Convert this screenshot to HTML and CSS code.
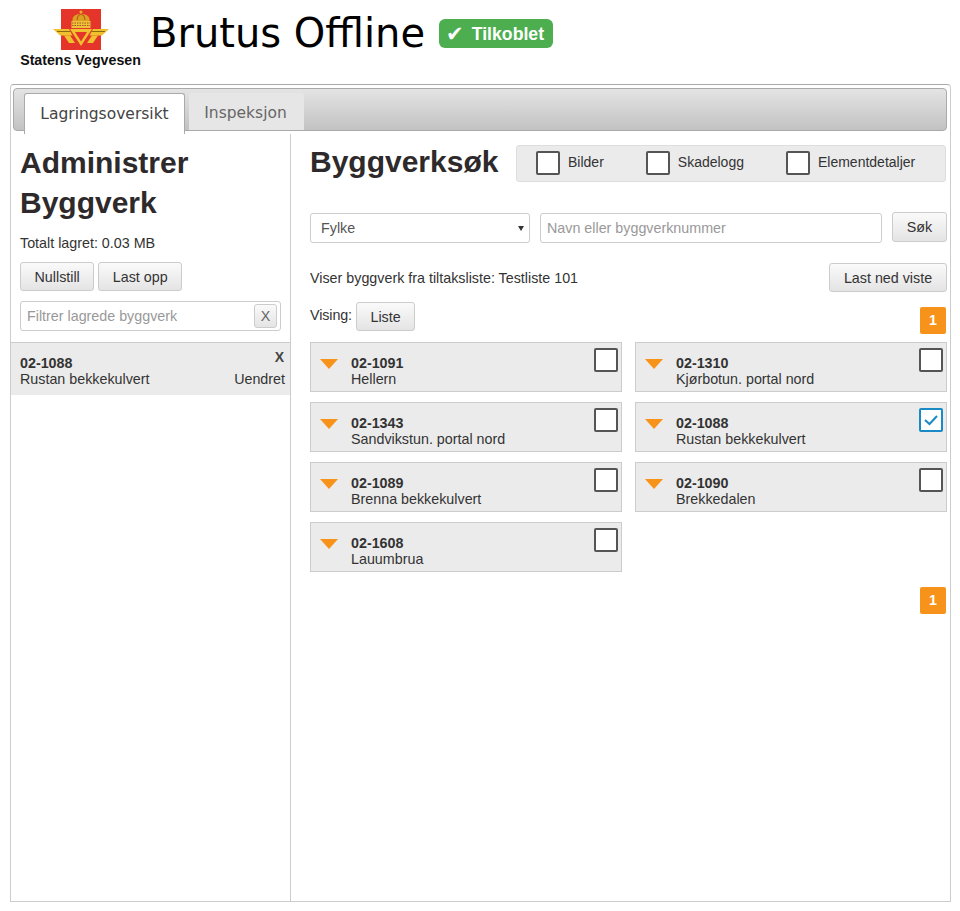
FILE: index.html
```html
<!DOCTYPE html>
<html lang="no">
<head>
<meta charset="utf-8">
<title>Brutus Offline</title>
<link rel="stylesheet" href="styles.css">
</head>
<body>
<header class="top">
  <div class="logo">
    <svg class="logo-mark" width="56" height="41" viewBox="0 0 56 41">
      <rect x="8" y="0" width="40" height="41" fill="#e5352b"/>
      <path d="M28 1.500v4M26.500 3h3" stroke="#e8b82a" stroke-width="1.300" fill="none"/>
      <path d="M19.500 10q1-5 8.500-5t8.500 5v3h-17z" fill="#d9a11f"/>
      <path d="M24 11q0-5 4-6q4 1 4 6" fill="none" stroke="#c9472a" stroke-width="1"/>
      <path d="M18.500 12h19v7h-19z" fill="#edc23a"/>
      <path d="M19 14h18M19 16.500h18" stroke="#a8501f" stroke-width="1" stroke-dasharray="1.500 1"/>
      <path d="M0 20h16l3.500 6.500H7z" fill="#efc12e"/>
      <path d="M56 20H40l-3.500 6.500H49z" fill="#efc12e"/>
      <path d="M4 22.500h13.500M52 22.500H38.500" stroke="#8a6a12" stroke-width="1"/>
      <path d="M17 20h22L28 37z" fill="#efc12e"/>
      <path d="M22 23h12l-6 9.500z" fill="#e5352b"/>
      <path d="M11 26.500h6l5 7.500h-6zM45 26.500h-6l-5 7.500h6z" fill="#efc12e"/>
    </svg>
    <span class="logo-text">Statens Vegvesen</span>
  </div>
  <h1 class="title">Brutus Offline</h1>
  <span class="badge"><span class="badge-check">✔</span> Tilkoblet</span>
</header>

<main class="panel">
  <nav class="tabbar">
    <span class="tab tab-active">Lagringsoversikt</span>
    <span class="tab">Inspeksjon</span>
  </nav>
  <div class="columns">
    <aside class="side">
      <div class="side-head">
        <h2 class="heading">Administrer Byggverk</h2>
        <p class="total">Totalt lagret: 0.03 MB</p>
        <div class="side-buttons">
          <button class="btn">Nullstill</button>
          <button class="btn">Last opp</button>
        </div>
        <div class="filter">
          <span class="placeholder">Filtrer lagrede byggverk</span>
          <button class="btn btn-x">X</button>
        </div>
      </div>
      <div class="saved">
        <div class="saved-text">
          <strong>02-1088</strong>
          <span>Rustan bekkekulvert</span>
        </div>
        <div class="saved-state">
          <b class="saved-x">X</b>
          <span>Uendret</span>
        </div>
      </div>
    </aside>
    <section class="content">
      <div class="content-head">
        <h2 class="heading">Byggverksøk</h2>
        <div class="options">
          <label class="option"><span class="box"></span>Bilder</label>
          <label class="option"><span class="box"></span>Skadelogg</label>
          <label class="option"><span class="box"></span>Elementdetaljer</label>
        </div>
      </div>
      <div class="search">
        <div class="field select">Fylke<span class="caret"></span></div>
        <div class="field name"><span class="placeholder">Navn eller byggverknummer</span></div>
        <button class="btn btn-search">Søk</button>
      </div>
      <div class="list-info">
        <span class="list-text">Viser byggverk fra tiltaksliste: Testliste 101</span>
        <button class="btn btn-down">Last ned viste</button>
      </div>
      <div class="view-row">
        <span class="view-label">Vising:</span>
        <button class="btn">Liste</button>
        <span class="page">1</span>
      </div>
      <div class="cards">
        <article class="card"><span class="tri"></span><div class="card-text"><strong>02-1091</strong><span>Hellern</span></div><span class="box"></span></article>
        <article class="card"><span class="tri"></span><div class="card-text"><strong>02-1310</strong><span>Kjørbotun. portal nord</span></div><span class="box"></span></article>
        <article class="card"><span class="tri"></span><div class="card-text"><strong>02-1343</strong><span>Sandvikstun. portal nord</span></div><span class="box"></span></article>
        <article class="card"><span class="tri"></span><div class="card-text"><strong>02-1088</strong><span>Rustan bekkekulvert</span></div><span class="box box-on"><svg width="20" height="20" viewBox="0 0 20 20"><path d="M4 10l4.500 4L16 6" fill="none" stroke="#1a8ac6" stroke-width="2"/></svg></span></article>
        <article class="card"><span class="tri"></span><div class="card-text"><strong>02-1089</strong><span>Brenna bekkekulvert</span></div><span class="box"></span></article>
        <article class="card"><span class="tri"></span><div class="card-text"><strong>02-1090</strong><span>Brekkedalen</span></div><span class="box"></span></article>
        <article class="card"><span class="tri"></span><div class="card-text"><strong>02-1608</strong><span>Lauumbrua</span></div><span class="box"></span></article>
      </div>
      <div class="pager-bottom"><span class="page">1</span></div>
    </section>
  </div>
</main>
</body>
</html>
```
FILE: styles.css
```css
* { box-sizing: border-box; }
html, body { margin: 0; padding: 0; }
body {
  width: 960px;
  height: 911px;
  background: #fff;
  color: #333;
  font: 14.300px/16px "Liberation Sans", Arial, sans-serif;
  overflow: hidden;
}
.top {
  display: flex;
  align-items: flex-start;
  height: 84px;
  padding-left: 20px;
}
.logo {
  display: flex;
  flex-direction: column;
  align-items: center;
  width: 121px;
  padding-top: 9px;
}
.logo-mark { display: block; }
.logo-text {
  margin-top: 2px;
  font-size: 14.200px;
  line-height: 16px;
  font-weight: bold;
  color: #111;
  white-space: nowrap;
}
.title {
  margin: 9px 0 0 9px;
  font: normal 40px/48px "DejaVu Sans", sans-serif;
  color: #000;
  white-space: nowrap;
}
.badge {
  display: flex;
  align-items: center;
  gap: 8px;
  height: 29px;
  width: 114px;
  margin: 19px 0 0 14px;
  padding-left: 7px;
  background: #4cae4f;
  border-radius: 6px;
  color: #fff;
  font-size: 17.700px;
  font-weight: bold;
  white-space: nowrap;
}
.badge-check { font: bold 21px/20px "DejaVu Sans", sans-serif; }
.panel {
  width: 941px;
  height: 818px;
  margin-left: 10px;
  border: 1px solid #ccc;
  border-top-color: #aaa;
  border-radius: 4px 4px 0 0;
  display: flex;
  flex-direction: column;
}
.tabbar {
  display: flex;
  gap: 4px;
  align-items: flex-end;
  flex: none;
  height: 43px;
  margin: 3px 3px 0 2px;
  padding-left: 10px;
  border: 1px solid #aaa;
  border-radius: 4px;
  background: linear-gradient(#e4e4e4, #c2c2c2);
}
.tab {
  display: flex;
  align-items: center;
  justify-content: center;
  height: 37px;
  width: 115px;
  padding: 2px 2px 0 0;
  background: #e6e6e6;
  border-radius: 3px 3px 0 0;
  color: #666;
  font: 15.500px/18px "DejaVu Sans", sans-serif;
}
.tab-active {
  position: relative;
  top: 4px;
  height: 41px;
  width: 161px;
  padding: 0;
  background: #fff;
  border: 1px solid #aaa;
  border-bottom: 0;
  color: #444;
}
.columns { display: flex; flex: 1; margin-top: 3px; }
.side { flex: none; width: 280px; border-right: 1px solid #ccc; padding-top: 1px; }
.side-head { padding: 8px 9px 0; }
.heading {
  margin: 0;
  font-size: 30px;
  line-height: 40px;
  font-weight: bold;
  color: #2e2a2b;
}
.total { margin: 12px 0 0; line-height: 16px; }
.side-buttons { display: flex; gap: 4px; margin-top: 11px; }
.btn {
  height: 29px;
  padding: 0 13.500px;
  border: 1px solid #ccc;
  border-radius: 3px;
  background: linear-gradient(#fafafa, #e4e4e4);
  color: #333;
  font: 14.300px/16px "Liberation Sans", Arial, sans-serif;
}
.filter {
  display: flex;
  align-items: center;
  justify-content: space-between;
  height: 30px;
  margin-top: 10px;
  padding: 0 3px 0 6px;
  border: 1px solid #ccc;
  border-radius: 3px;
}
.placeholder { color: #999; }
.btn-x { width: 23px; height: 24px; padding: 0; color: #666; }
.saved {
  display: flex;
  justify-content: space-between;
  height: 53px;
  margin-top: 11px;
  padding: 12px 5px 0 9px;
  background: #ebebeb;
  border-top: 1px solid #ccc;
}
.saved-text, .card-text { display: flex; flex-direction: column; }
.saved-state {
  display: flex;
  flex-direction: column;
  align-items: flex-end;
}
.saved-x { margin: -6px 1px 6px 0; font-size: 14px; color: #444; }
.content { flex: 1; padding: 0 3px 0 19px; }
.content-head {
  display: flex;
  justify-content: space-between;
  align-items: flex-start;
  padding-top: 8px;
}
.options {
  display: flex;
  gap: 42px;
  width: 430px;
  height: 37px;
  margin: 3px 1px 0 0;
  padding: 5px 0 0 19px;
  background: #ebebeb;
  border: 1px solid #ddd;
  border-radius: 3px;
  font-size: 14px;
}
.option { display: flex; align-items: flex-start; gap: 8px; line-height: 22px; }
.box {
  display: block;
  width: 24px;
  height: 24px;
  flex: none;
  background: #fff;
  border: 2px solid #555;
  border-radius: 2px;
}
.box-on { border-color: #1a8ac6; }
.box-on svg { display: block; }
.search {
  display: flex;
  gap: 10px;
  align-items: flex-start;
  margin-top: 31px;
}
.field {
  height: 30px;
  padding: 0 10px;
  border: 1px solid #ccc;
  border-radius: 3px;
  line-height: 28px;
  color: #555;
}
.select {
  position: relative;
  width: 220px;
}
.caret {
  position: absolute;
  right: 5px;
  top: 12px;
  border: 3.500px solid transparent;
  border-top: 5px solid #333;
  border-bottom: 0;
}
.name { width: 342px; padding: 0 6px; }
.btn-search { width: 55px; height: 30px; padding: 0; margin-top: -1px; }
.list-info {
  display: flex;
  justify-content: space-between;
  align-items: center;
  margin-top: 20px;
}
.btn-down { width: 118px; padding: 0; }
.view-row {
  display: flex;
  align-items: flex-start;
  margin-top: 10px;
  height: 40px;
}
.view-label { margin: 5px 4px 0 0; letter-spacing: -.1px; }
.page {
  width: 26px;
  height: 27px;
  margin: 5px 1px 0 auto;
  background: #f7931a;
  border-radius: 2px;
  color: #fff;
  font-weight: bold;
  line-height: 27px;
  text-align: center;
}
.cards {
  display: grid;
  grid-template-columns: 312px 312px;
  column-gap: 13px;
  row-gap: 10px;
}
.card {
  display: flex;
  align-items: flex-start;
  height: 50px;
  padding: 5px 3px 0 9px;
  background: #ebebeb;
  border: 1px solid #ccc;
}
.tri {
  flex: none;
  width: 0;
  height: 0;
  margin: 11px 13px 0 0;
  border-left: 9.500px solid transparent;
  border-right: 9.500px solid transparent;
  border-top: 10px solid #f7931a;
}
.card-text { flex: 1; margin-top: 7px; }
.pager-bottom { display: flex; margin-top: 10px; }
```
